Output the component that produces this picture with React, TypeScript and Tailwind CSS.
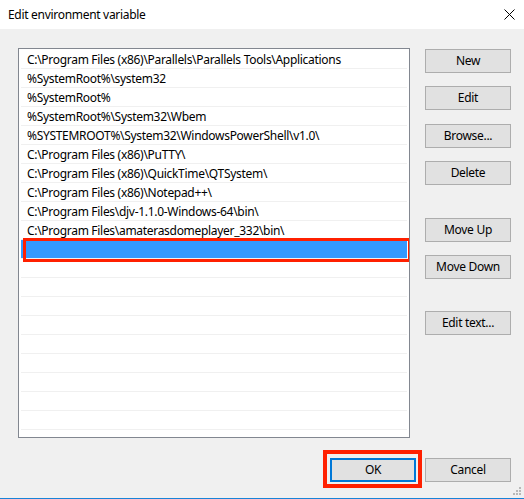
const paths = [
  "C:\\Program Files (x86)\\Parallels\\Parallels Tools\\Applications",
  "%SystemRoot%\\system32",
  "%SystemRoot%",
  "%SystemRoot%\\System32\\Wbem",
  "%SYSTEMROOT%\\System32\\WindowsPowerShell\\v1.0\\",
  "C:\\Program Files (x86)\\PuTTY\\",
  "C:\\Program Files (x86)\\QuickTime\\QTSystem\\",
  "C:\\Program Files (x86)\\Notepad++\\",
  "C:\\Program Files\\djv-1.1.0-Windows-64\\bin\\",
  "C:\\Program Files\\amaterasdomeplayer_332\\bin\\",
];

const rows: (string | null)[] = [...paths, "", ...Array(10).fill(null)];

function Button({ label, className = "" }: { label: string; className?: string }) {
  return (
    <button className={`w-[86px] h-[24px] bg-[#e1e1e1] border border-[#adadad] text-[12px] text-black leading-none ${className}`}>
      {label}
    </button>
  );
}

export default function App() {
  return (
    <div
      className="w-[524px] h-[499px] flex flex-col bg-[#f0f0f0] border-b border-[#1883d7] overflow-hidden text-black tracking-[-0.3px]"
      style={{ fontFamily: '"Noto Sans", "Segoe UI", sans-serif' }}
    >
      {/* Title bar */}
      <div className="h-[29px] bg-white flex items-center justify-between pl-[8px] pr-[9px] shrink-0">
        <span className="text-[12px]">Edit environment variable</span>
        <svg width="11" height="11" viewBox="0 0 11 11" className="text-black">
          <path d="M0.5 0.5 L10.5 10.5 M10.5 0.5 L0.5 10.5" stroke="currentColor" strokeWidth="1" />
        </svg>
      </div>

      {/* Body */}
      <div className="flex pl-[18px] pt-[19px] gap-[15px]">
        <div className="relative w-[392px] h-[390px] bg-white border border-[#828790] p-px overflow-hidden">
          {rows.map((r, i) => (
            <div
              key={i}
              className={`h-[19px] mx-px border-b border-[#f0f0f0] pl-[6px] text-[12px] leading-[20px] whitespace-nowrap ${
                r === "" ? "bg-[#3399ff]" : ""
              }`}
            >
              {r}
            </div>
          ))}
          {/* highlight annotation */}
          <div className="absolute left-[4px] top-[189px] w-[388px] h-[24px] border-[3px] border-[#ff2000]" />
        </div>

        <div className="flex flex-col pt-px">
          <Button label="New" />
          <Button label="Edit" className="mt-[13px]" />
          <Button label="Browse..." className="mt-[14px]" />
          <Button label="Delete" className="mt-[13px]" />
          <Button label="Move Up" className="mt-[33px]" />
          <Button label="Move Down" className="mt-[13px]" />
          <Button label="Edit text..." className="mt-[32px]" />
        </div>
      </div>

      {/* Footer */}
      <div className="relative flex justify-end gap-[9px] pr-[13px] mt-[20px]">
        <button className="w-[86px] h-[24px] bg-[#e1e1e1] border-2 border-[#0078d7] text-[12px] leading-none">
          OK
        </button>
        <Button label="Cancel" />
        <div className="absolute left-[323px] top-[-8px] w-[99px] h-[38px] border-[4px] border-[#ff2000]" />
      </div>

      {/* size grip */}
      <div className="flex-1 flex justify-end items-end pr-[2px] pb-[2px]">
        <svg width="9" height="9" viewBox="0 0 9 9">
          <rect x="6" y="0" width="2" height="2" fill="#b8b8b8" />
          <rect x="3" y="3" width="2" height="2" fill="#b8b8b8" />
          <rect x="6" y="3" width="2" height="2" fill="#b8b8b8" />
          <rect x="0" y="6" width="2" height="2" fill="#b8b8b8" />
          <rect x="3" y="6" width="2" height="2" fill="#b8b8b8" />
          <rect x="6" y="6" width="2" height="2" fill="#b8b8b8" />
        </svg>
      </div>
    </div>
  );
}
